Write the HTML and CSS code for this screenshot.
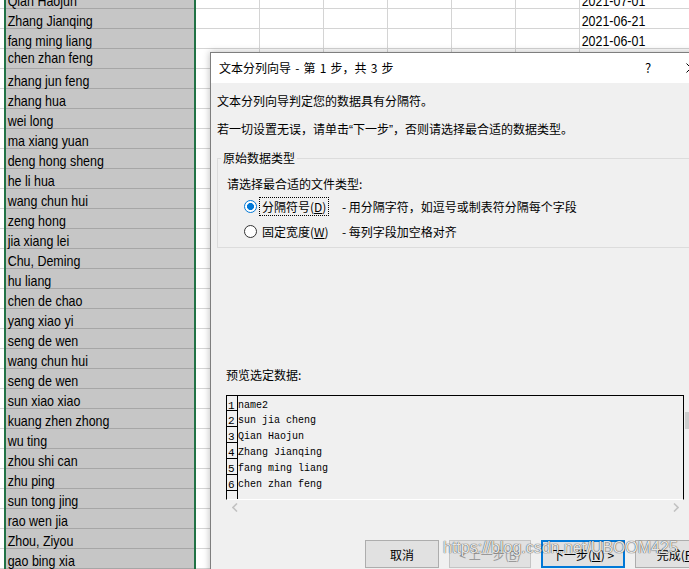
FILE: index.html
```html
<!DOCTYPE html>
<html lang="zh-CN">
<head>
<meta charset="utf-8">
<title>文本分列向导</title>
<link rel="stylesheet" href="styles.css">
</head>
<body>
<div class="sheet">
  <div class="col-a"></div>
  <div class="col-sel">
    <div class="cell">Qian Haojun</div>
    <div class="cell">Zhang Jianqing</div>
    <div class="cell">fang ming liang</div>
    <div class="cell up">chen zhan feng</div>
    <div class="cell">zhang jun feng</div>
    <div class="cell">zhang hua</div>
    <div class="cell">wei long</div>
    <div class="cell">ma xiang yuan</div>
    <div class="cell">deng hong sheng</div>
    <div class="cell">he li hua</div>
    <div class="cell">wang chun hui</div>
    <div class="cell">zeng hong</div>
    <div class="cell">jia xiang lei</div>
    <div class="cell">Chu, Deming</div>
    <div class="cell">hu liang</div>
    <div class="cell">chen de chao</div>
    <div class="cell">yang xiao yi</div>
    <div class="cell">seng de wen</div>
    <div class="cell">wang chun hui</div>
    <div class="cell">seng de wen</div>
    <div class="cell">sun xiao xiao</div>
    <div class="cell">kuang zhen zhong</div>
    <div class="cell">wu ting</div>
    <div class="cell">zhou shi can</div>
    <div class="cell">zhu ping</div>
    <div class="cell">sun tong jing</div>
    <div class="cell">rao wen jia</div>
    <div class="cell">Zhou, Ziyou</div>
    <div class="cell">gao bing xia</div>
  </div>
  <div class="col-empty"></div>
  <div class="col-date">
    <div class="cell">2021-07-01</div>
    <div class="cell">2021-06-21</div>
    <div class="cell">2021-06-01</div>
    <div class="cell up">2021-06-01</div>
  </div>
</div>

<div class="dialog">
  <div class="titlebar">
    <div class="title">文本分列向导 - 第 1 步，共 3 步</div>
    <div class="help">?</div>
    <div class="close">
      <svg width="10" height="10" viewBox="0 0 10 10"><path d="M0.5 0.5 L9.5 9.5 M9.5 0.5 L0.5 9.5" stroke="#000" stroke-width="1" fill="none"/></svg>
    </div>
  </div>
  <div class="dbody">
    <div class="line">文本分列向导判定您的数据具有分隔符。</div>
    <div class="line l2">若一切设置无误，请单击<span class="q">“</span>下一步<span class="q">”</span>，否则请选择最合适的数据类型。</div>
    <fieldset class="group">
      <legend>原始数据类型</legend>
      <div class="line">请选择最合适的文件类型:</div>
      <div class="opts">
        <div class="opt">
          <span class="radio on"></span>
          <span class="lab"><span class="focus">分隔符号(<u>D</u>)</span></span>
          <span class="desc">- 用分隔字符，如逗号或制表符分隔每个字段</span>
        </div>
        <div class="opt">
          <span class="radio"></span>
          <span class="lab"><span>固定宽度(<u>W</u>)</span></span>
          <span class="desc">- 每列字段加空格对齐</span>
        </div>
      </div>
    </fieldset>
    <div class="line pv-label">预览选定数据:</div>
    <div class="pv">
      <div class="pbox">
        <div class="prow"><span class="pnum">1</span><span class="ptxt">name2</span></div>
        <div class="prow"><span class="pnum">2</span><span class="ptxt">sun jia cheng</span></div>
        <div class="prow"><span class="pnum">3</span><span class="ptxt">Qian Haojun</span></div>
        <div class="prow"><span class="pnum">4</span><span class="ptxt">Zhang Jianqing</span></div>
        <div class="prow"><span class="pnum">5</span><span class="ptxt">fang ming liang</span></div>
        <div class="prow"><span class="pnum">6</span><span class="ptxt">chen zhan feng</span></div>
        <div class="prow"><span class="pnum"></span><span class="ptxt"></span></div>
      </div>
      <div class="vscroll"><div class="thumb"></div></div>
    </div>
    <div class="hscroll">
      <svg width="6" height="9" viewBox="0 0 6 9"><path d="M5 0.5 L1 4.5 L5 8.5" stroke="#c2c2c2" stroke-width="1.6" fill="none"/></svg>
      <svg width="6" height="9" viewBox="0 0 6 9"><path d="M1 0.5 L5 4.5 L1 8.5" stroke="#c2c2c2" stroke-width="1.6" fill="none"/></svg>
    </div>
    <div class="btns">
      <div class="btn w74">取消</div>
      <div class="btn w82 disabled">&lt; 上一步(<u>B</u>)</div>
      <div class="btn w84 default">下一步(<u>N</u>) &gt;</div>
      <div class="btn w82">完成(<u>F</u>)</div>
    </div>
  </div>
</div>

<div class="watermark">https://blog.csdn.net/UBOOM425</div>
</body>
</html>
```

FILE: styles.css
```css
* { box-sizing: border-box; }
html, body { margin: 0; padding: 0; }
body {
  width: 689px;
  height: 569px;
  overflow: hidden;
  position: relative;
  background: #fff;
  font-family: "Noto Sans CJK SC", sans-serif;
  color: #000;
}

/* ---------- spreadsheet ---------- */
.sheet {
  display: flex;
  margin-top: -11px;
  height: 600px;
}
.col-a {
  width: 4px;
  flex: none;
  background: repeating-linear-gradient(to bottom, #fff 0 19px, #d4d4d4 19px 20px);
}
.col-sel {
  width: 192px;
  flex: none;
  border-left: 2px solid #217346;
  border-right: 2px solid #217346;
  background: repeating-linear-gradient(to bottom, #c6c6c6 0 19px, #a6a6a6 19px 20px);
}
.col-empty {
  width: 384px;
  flex: none;
  background-image:
    repeating-linear-gradient(to right, transparent 0 63px, #d4d4d4 63px 64px),
    repeating-linear-gradient(to bottom, #fff 0 19px, #d4d4d4 19px 20px);
}
.col-date {
  flex: 1;
  background: repeating-linear-gradient(to bottom, #fff 0 19px, #d4d4d4 19px 20px);
}
.cell {
  height: 20px;
  padding: 2px 0 0 2px;
  line-height: 20px;
  font-family: "Liberation Sans", Arial, sans-serif;
  font-size: 15px;
  white-space: nowrap;
  transform: scaleX(0.83);
  transform-origin: 0 0;
}
.cell.up {
  padding-top: 0;
  line-height: 18px;
}

/* ---------- dialog ---------- */
.dialog {
  position: absolute;
  left: 210px;
  top: 52px;
  width: 520px;
  height: 540px;
  background: #f0f0f0;
  border: 1px solid #7e7e7e;
  box-shadow: 0 0 7px rgba(0, 0, 0, 0.28);
  font-size: 12px;
}
.titlebar {
  height: 30px;
  background: #fff;
  display: flex;
  align-items: center;
  padding: 0 15px 0 8px;
}
.title {
  flex: 1;
  line-height: 30px;
  white-space: nowrap;
  word-spacing: 1.5px;
}
.help {
  width: 40px;
  text-align: center;
  font-size: 13px;
  line-height: 30px;
}
.close {
  width: 46px;
  display: flex;
  justify-content: center;
  align-items: center;
}
.close svg { display: block; }

.dbody {
  padding: 10px 6px 0 6px;
}
.line {
  line-height: 16px;
  white-space: nowrap;
}
.l2 { margin-top: 12px; }
.q { font-family: "Liberation Sans", sans-serif; }

.group {
  margin: 12px 0 0;
  padding: 10px 0 6px 9px;
  border: 1px solid #dcdcdc;
  min-width: 0;
}
.group legend {
  padding: 0 2px;
  margin-left: -6px;
  line-height: 16px;
}
.opts {
  margin-top: 5px;
  padding-left: 17px;
  display: flex;
  flex-direction: column;
  gap: 6px;
}
.opt {
  display: flex;
  align-items: center;
  height: 19px;
  white-space: nowrap;
}
.radio {
  width: 13px;
  height: 13px;
  flex: none;
  border-radius: 50%;
  border: 1px solid #333;
  background: #fff;
  margin-right: 2px;
}
.radio.on {
  border-color: #0078d7;
  background: radial-gradient(circle, #0078d7 0 3.2px, #fff 3.8px);
}
.lab {
  width: 83px;
  flex: none;
}
.lab span {
  display: inline-block;
  padding: 0 2px;
  border: 1px dotted transparent;
  line-height: 17px;
}
.lab span.focus { border-color: #000; }

.pv-label {
  margin: 119px 0 0 9px;
}
.pv {
  display: flex;
  margin: 12px 0 0 9px;
}
.pbox {
  width: 458px;
  height: 105px;
  flex: none;
  border: 1px solid #000;
  border-bottom-color: #fff;
  overflow: hidden;
}
.prow {
  display: flex;
  height: 16px;
}
.prow:first-child { height: 15px; }
.pnum {
  width: 11px;
  flex: none;
  border-right: 1px solid #000;
  border-bottom: 1px solid #000;
  padding: 3px 0 0 1px;
  font-family: "Liberation Mono", monospace;
  font-size: 11px;
  line-height: 14px;
}
.ptxt {
  padding-top: 3px;
  font-family: "Liberation Mono", monospace;
  font-size: 10px;
  line-height: 14px;
  white-space: pre;
}
.vscroll {
  width: 17px;
  padding: 17px 0 0 1px;
}
.thumb {
  width: 13px;
  height: 17px;
  background: #cdcdcd;
}
.hscroll {
  margin-left: 9px;
  width: 458px;
  height: 15px;
  display: flex;
  justify-content: space-between;
  align-items: center;
  padding: 0 5px 0 6px;
}
.hscroll svg { display: block; }

.btns {
  display: flex;
  gap: 10px;
  margin: 25px 0 0 148px;
}
.btn {
  height: 28px;
  flex: none;
  display: flex;
  align-items: center;
  justify-content: center;
  background: #e1e1e1;
  border: 1px solid #adadad;
  white-space: nowrap;
}
.w74 { width: 74px; }
.w82 { width: 82px; }
.w84 { width: 84px; }
.btn.disabled {
  border-color: #c4c4c4;
  color: #9a9a9a;
}
.btn.default {
  border: 2px solid #0078d7;
}

.watermark {
  position: absolute;
  left: 443px;
  top: 538px;
  font-family: "Liberation Sans", sans-serif;
  font-size: 16px;
  line-height: 20px;
  color: rgba(255, 255, 255, 0.9);
  text-shadow: 0 0 1px rgba(0, 0, 0, 0.7), 0 0 1px rgba(0, 0, 0, 0.5);
  white-space: nowrap;
}
```
